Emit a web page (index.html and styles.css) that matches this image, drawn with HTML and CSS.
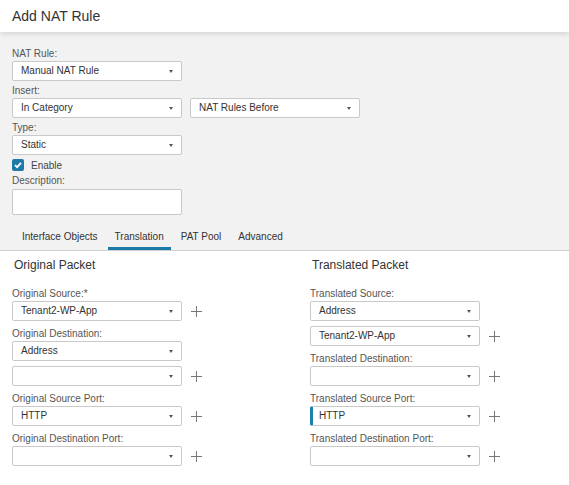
FILE: index.html
```html
<!DOCTYPE html>
<html lang="en">
<head>
<meta charset="UTF-8">
<title>Add NAT Rule</title>
<link rel="stylesheet" href="styles.css">
</head>
<body>
<div class="dialog-header">Add NAT Rule</div>

<div class="top-panel">
  <div class="field">
    <div class="label">NAT Rule:</div>
    <div class="select">Manual NAT Rule</div>
  </div>
  <div class="field">
    <div class="label">Insert:</div>
    <div class="row">
      <div class="select">In Category</div>
      <div class="select">NAT Rules Before</div>
    </div>
  </div>
  <div class="field">
    <div class="label">Type:</div>
    <div class="select">Static</div>
  </div>
  <div class="check-row">
    <span class="checkbox">
      <svg width="10" height="10" viewBox="0 0 10 10"><path d="M2 5.2 L4.1 7.2 L8 2.8" fill="none" stroke="#fff" stroke-width="1.8"/></svg>
    </span>
    <span>Enable</span>
  </div>
  <div class="field">
    <div class="label">Description:</div>
    <div class="textarea"></div>
  </div>

  <div class="tabs">
    <div class="tab">Interface Objects</div>
    <div class="tab active">Translation</div>
    <div class="tab">PAT Pool</div>
    <div class="tab">Advanced</div>
  </div>
</div>

<div class="packets">
  <div class="column">
    <div class="col-title">Original Packet</div>
    <div class="field">
      <div class="label">Original Source:*</div>
      <div class="row"><div class="select">Tenant2-WP-App</div><span class="plus"></span></div>
    </div>
    <div class="field">
      <div class="label">Original Destination:</div>
      <div class="select">Address</div>
      <div class="row stacked"><div class="select"></div><span class="plus"></span></div>
    </div>
    <div class="field">
      <div class="label">Original Source Port:</div>
      <div class="row"><div class="select">HTTP</div><span class="plus"></span></div>
    </div>
    <div class="field">
      <div class="label">Original Destination Port:</div>
      <div class="row"><div class="select"></div><span class="plus"></span></div>
    </div>
  </div>

  <div class="column">
    <div class="col-title">Translated Packet</div>
    <div class="field">
      <div class="label">Translated Source:</div>
      <div class="select">Address</div>
      <div class="row stacked"><div class="select">Tenant2-WP-App</div><span class="plus"></span></div>
    </div>
    <div class="field">
      <div class="label">Translated Destination:</div>
      <div class="row"><div class="select"></div><span class="plus"></span></div>
    </div>
    <div class="field">
      <div class="label">Translated Source Port:</div>
      <div class="row"><div class="select focused">HTTP</div><span class="plus"></span></div>
    </div>
    <div class="field">
      <div class="label">Translated Destination Port:</div>
      <div class="row"><div class="select"></div><span class="plus"></span></div>
    </div>
  </div>
</div>
</body>
</html>
```

FILE: styles.css
```css
body {
  margin: 0;
  background: #fff;
  color: #444;
  font-family: 'Liberation Sans', Arial, sans-serif;
  font-size: 10px;
}

.dialog-header {
  height: 32px;
  line-height: 32px;
  padding-left: 12px;
  font-size: 14px;
  color: #333;
  background: #fff;
  box-shadow: 0 2px 5px rgba(0, 0, 0, 0.12);
  position: relative;
}

.top-panel {
  background: #f2f2f2;
  padding: 15px 0 0 12px;
  border-bottom: 1px solid #cfcfcf;
}

.field {
  margin-bottom: 3px;
}

.label {
  height: 14px;
  line-height: 14px;
  color: #555;
}

.row {
  display: flex;
  align-items: center;
  gap: 8px;
}

.select {
  width: 170px;
  height: 20px;
  line-height: 18px;
  box-sizing: border-box;
  border: 1px solid #c9c9c9;
  border-radius: 2px;
  background: #fff;
  padding-left: 8px;
  color: #333;
  position: relative;
}

.select::after {
  content: '';
  position: absolute;
  right: 8px;
  top: 8px;
  border-left: 2.5px solid transparent;
  border-right: 2.5px solid transparent;
  border-top: 3.5px solid #555;
}

.select.focused {
  border-left: 3px solid #1b80ad;
  padding-left: 6px;
}

.check-row {
  display: flex;
  align-items: center;
  gap: 7px;
  height: 14px;
  margin: 1px 0 2px;
  color: #444;
}

.checkbox {
  width: 12px;
  height: 12px;
  border-radius: 2px;
  background: #1e7aa6;
  display: flex;
  align-items: center;
  justify-content: center;
}

.textarea {
  width: 170px;
  height: 26px;
  box-sizing: border-box;
  border: 1px solid #c9c9c9;
  border-radius: 2px;
  background: #fff;
  margin-top: 1px;
}

.tabs {
  display: flex;
  margin: 15px 0 0 3px;
}

.tab {
  padding: 0 7px;
  margin-right: 3px;
  height: 20px;
  line-height: 14px;
  color: #333;
  box-sizing: border-box;
}

.tab.active {
  border-bottom: 3px solid #1b7ba6;
}

.packets {
  display: grid;
  grid-template-columns: 298px 1fr;
  padding: 6px 0 0 12px;
}

.col-title {
  font-size: 12px;
  color: #333;
  height: 16px;
  line-height: 16px;
  padding-left: 2px;
  margin-bottom: 14px;
}

.column .field {
  margin-bottom: 6px;
}

.stacked {
  margin-top: 5px;
}

.plus {
  width: 11px;
  height: 11px;
  margin-left: 1px;
  position: relative;
}

.plus::before,
.plus::after {
  content: '';
  position: absolute;
  background: #777;
}

.plus::before {
  left: 5px;
  top: 0;
  width: 1px;
  height: 11px;
}

.plus::after {
  top: 5px;
  left: 0;
  width: 11px;
  height: 1px;
}
```
